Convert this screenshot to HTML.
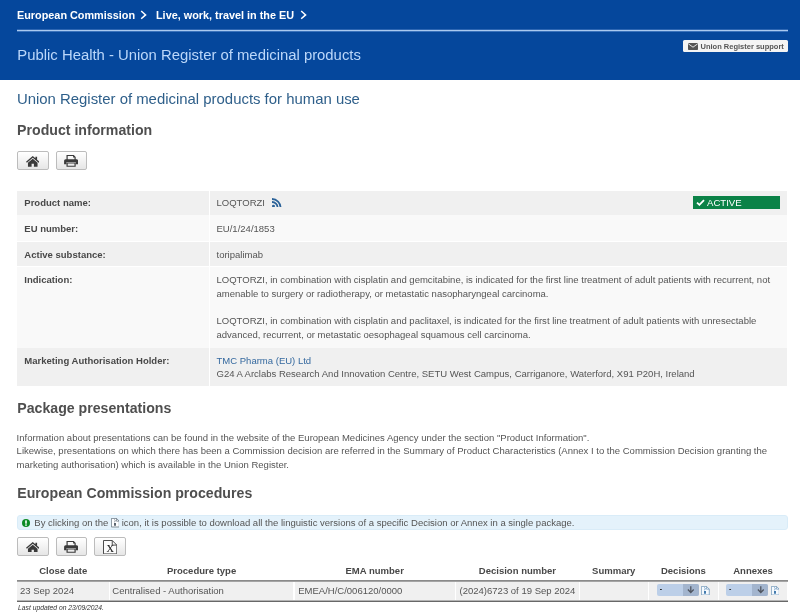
<!DOCTYPE html>
<html lang="en"><head><meta charset="utf-8"><title>Union Register of medicinal products</title>
<style>
*{box-sizing:border-box}
html,body{margin:0;padding:0}
body{width:800px;height:614px;overflow:hidden;background:#fff;font-family:"Liberation Sans",Arial,sans-serif;color:#555;font-size:9.52px;position:relative;will-change:transform}
.hdr{position:absolute;left:0;top:0;width:800px;height:80px;background:#05479c}
.x{position:absolute;white-space:nowrap;line-height:14px;height:14px}
.b{font-weight:bold;color:#484848}
.crumb{color:#fff;font-weight:bold;font-size:10.85px}
.site{color:#bbd7fa;font-size:14.87px;line-height:20px;height:20px}
h1.x{margin:0;font-weight:normal;font-size:14.92px;color:#2e5f8a;line-height:20px;height:20px}
h2.x{margin:0;font-weight:bold;font-size:14.15px;color:#4f4f4f;line-height:20px;height:20px}
.support{position:absolute;left:683px;top:39.6px;width:104.5px;height:12.4px;background:#f4f4f4;border-radius:1.5px}
.btn{position:absolute;height:19px;border:1px solid #bcbcbc;border-radius:2px;background:linear-gradient(#ffffff,#e6e6e6)}
.btn svg{position:absolute}
.cell{position:absolute}
.odd{background:#f0f0f0}
.even{background:#f9f9f9}
a{color:#35699f;text-decoration:none}
.active{position:absolute;left:692.5px;top:196px;width:87.5px;height:13px;background:#0b8247}
.info{position:absolute;left:17px;top:515.3px;width:770.5px;height:15.2px;background:#e4f2fb;border:1px solid #d9ecf8;border-radius:3px}
.sel{position:absolute;top:584px;height:11.5px;background:#bccfe8;border-radius:2px;overflow:hidden}
.sel i{position:absolute;right:0;top:0;bottom:0;width:16px;background:#a3b5ce}
.foot{font-size:6.75px;font-style:italic;color:#333;line-height:10px;height:10px}
svg{display:block}
</style></head><body>

<div class="hdr">
<div class="x crumb" style="left:17px;top:8px;">European Commission</div>
<div class="x crumb" style="left:156px;top:8px;">Live, work, travel in the EU</div>
<svg class="x" style="left:140px;top:10.2px;height:10px" width="7" height="10" viewBox="0 0 7 10"><path d="M1.2 1 L5.6 4.9 L1.2 8.8" stroke="#fff" stroke-width="1.5" fill="none"/></svg>
<svg class="x" style="left:299.5px;top:10.2px;height:10px" width="7" height="10" viewBox="0 0 7 10"><path d="M1.2 1 L5.6 4.9 L1.2 8.8" stroke="#fff" stroke-width="1.5" fill="none"/></svg>
<div style="position:absolute;left:17px;top:30px;width:770.5px;height:1px;background:#a9c9f0"></div>
<div style="position:absolute;left:17px;top:29px;width:770.5px;height:1px;background:#2d66b2"></div>
<div style="position:absolute;left:17px;top:31px;width:770.5px;height:1px;background:#3a72bb"></div>
<div class="x site" style="left:17.3px;top:45px;">Public Health - Union Register of medicinal products</div>
<div class="support"><svg style="position:absolute;left:4.5px;top:3.5px" width="10" height="7" viewBox="0 0 10 7"><rect width="10" height="7" rx="0.8" fill="#555"/><path d="M0.3 0.8 L5 4.2 L9.7 0.8" stroke="#f4f4f4" stroke-width="0.9" fill="none"/></svg>
<div class="x b" style="left:17.5px;top:2px;font-size:7.5px;line-height:10px;height:10px;color:#555">Union Register support</div></div>
</div>
<h1 class="x " style="left:16.9px;top:89px;">Union Register of medicinal products for human use</h1>
<h2 class="x " style="left:17.1px;top:120px;">Product information</h2>
<div class="btn" style="left:17px;top:151.3px;width:31.5px"><svg style="left:7.9px;top:3.5px" width="13.5" height="10.8" viewBox="0 0 27 21.6"><path d="M13.5 0 L0 11.6 L1.8 13.7 L13.5 3.7 L25.2 13.7 L27 11.6 L22.2 7.5 V1.4 H18.8 V4.6 Z" fill="#3a3a3a"/><path d="M13.5 5.5 L3.9 13.7 V21.6 H11.2 V15.4 H15.8 V21.6 H23.1 V13.7 Z" fill="#3a3a3a"/></svg></div>
<div class="btn" style="left:55.5px;top:151.3px;width:31.5px"><svg style="left:7.3px;top:3.0px" width="14.2" height="11.8" viewBox="0 0 28 23.6"><path d="M4.8 0 H19.4 L23.2 3.8 V10 H20.8 V5 H18 V2.2 H7.2 V10 H4.8 Z" fill="#3a3a3a"/><path d="M3 8.6 H25 Q28 8.6 28 11.6 V18.6 H23.2 V13.8 H4.8 V18.6 H0 V11.6 Q0 8.6 3 8.6 Z" fill="#3a3a3a"/><path d="M4.8 15 H23.2 V23.6 H4.8 Z M7.2 17.2 V21.4 H20.8 V17.2 Z" fill="#3a3a3a" fill-rule="evenodd"/></svg></div>
<div class="cell odd" style="left:17px;top:190.5px;width:192px;height:24.0px"></div>
<div class="cell odd" style="left:209.8px;top:190.5px;width:577.7px;height:24.0px"></div>
<div class="cell even" style="left:17px;top:215.2px;width:192px;height:26.1px"></div>
<div class="cell even" style="left:209.8px;top:215.2px;width:577.7px;height:26.1px"></div>
<div class="cell odd" style="left:17px;top:242px;width:192px;height:24.3px"></div>
<div class="cell odd" style="left:209.8px;top:242px;width:577.7px;height:24.3px"></div>
<div class="cell even" style="left:17px;top:267px;width:192px;height:80.5px"></div>
<div class="cell even" style="left:209.8px;top:267px;width:577.7px;height:80.5px"></div>
<div class="cell odd" style="left:17px;top:348.2px;width:192px;height:37.4px"></div>
<div class="cell odd" style="left:209.8px;top:348.2px;width:577.7px;height:37.4px"></div>
<div class="x b" style="left:24.3px;top:196px;">Product name:</div>
<div class="x b" style="left:24.3px;top:222px;">EU number:</div>
<div class="x b" style="left:24.3px;top:248px;">Active substance:</div>
<div class="x b" style="left:24.3px;top:273px;">Indication:</div>
<div class="x b" style="left:24.3px;top:354px;">Marketing Authorisation Holder:</div>
<div class="x " style="left:216.5px;top:196px;">LOQTORZI</div>
<svg class="x" style="left:271.6px;top:197.8px;height:9.7px" width="10.5" height="9.7" viewBox="0 0 20 18"><circle cx="2.8" cy="15.2" r="2.8" fill="#2b6298"/><path d="M0 7.4 A10.6 10.6 0 0 1 10.6 18" stroke="#2b6298" stroke-width="3.4" fill="none"/><path d="M0 1.7 A16.3 16.3 0 0 1 16.3 18" stroke="#2b6298" stroke-width="3.4" fill="none"/></svg>
<div class="active"><svg style="position:absolute;left:3px;top:3.2px" width="9" height="7" viewBox="0 0 18 14"><path d="M2 7.2 L6.8 11.6 L16 2.2" stroke="#fff" stroke-width="3.6" fill="none"/></svg>
<div class="x" style="left:14.5px;top:0px;color:#fff;font-size:9.6px">ACTIVE</div></div>
<div class="x " style="left:216.5px;top:222px;">EU/1/24/1853</div>
<div class="x " style="left:216.5px;top:248px;">toripalimab</div>
<div class="x " style="left:216.5px;top:273px;">LOQTORZI, in combination with cisplatin and gemcitabine, is indicated for the first line treatment of adult patients with recurrent, not</div>
<div class="x " style="left:216.5px;top:287px;">amenable to surgery or radiotherapy, or metastatic nasopharyngeal carcinoma.</div>
<div class="x " style="left:216.5px;top:314px;">LOQTORZI, in combination with cisplatin and paclitaxel, is indicated for the first line treatment of adult patients with unresectable</div>
<div class="x " style="left:216.5px;top:328px;">advanced, recurrent, or metastatic oesophageal squamous cell carcinoma.</div>
<div class="x " style="left:216.5px;top:354px;"><a>TMC Pharma (EU) Ltd</a></div>
<div class="x " style="left:216.5px;top:367px;">G24 A Arclabs Research And Innovation Centre, SETU West Campus, Carriganore, Waterford, X91 P20H, Ireland</div>
<h2 class="x " style="left:17.3px;top:398px;">Package presentations</h2>
<div class="x " style="left:16.6px;top:431px;">Information about presentations can be found in the website of the European Medicines Agency under the section "Product Information".</div>
<div class="x " style="left:16.6px;top:444px;">Likewise, presentations on which there has been a Commission decision are referred in the Summary of Product Characteristics (Annex I to the Commission Decision granting the</div>
<div class="x " style="left:16.6px;top:458px;">marketing authorisation) which is available in the Union Register.</div>
<h2 class="x " style="left:17.3px;top:483px;">European Commission procedures</h2>
<div class="info"></div>
<svg class="x" style="left:22px;top:519.2px;height:8px" width="8" height="8" viewBox="0 0 16 16"><circle cx="8" cy="8" r="8" fill="#0c8a25"/><rect x="6.4" y="2.8" width="3.2" height="6.6" fill="#fff"/><rect x="6.4" y="10.8" width="3.2" height="2.8" fill="#fff"/></svg>
<div class="x " style="left:34.3px;top:516px;">By clicking on the</div>
<svg class="x" style="left:110.8px;top:518.4px;height:9.4px" width="8.7" height="9.4" viewBox="0 0 17.4 18.8"><path d="M0.8 0.8 H11 L16.6 6.4 V18 H0.8 Z" fill="#fdfeff" stroke="#5c6b78" stroke-width="1.5"/><path d="M11 0.8 V6.4 H16.6" fill="none" stroke="#5c6b78" stroke-width="1.3"/><path d="M6.4 3 H8 V4.6 H6.4 Z M8 5 H9.6 V6.6 H8 Z M6.4 7 H8 V8.6 H6.4 Z M6.2 10 H9.8 V15.6 H6.2 Z" fill="#4a5560"/></svg>
<div class="x " style="left:121.7px;top:516px;">icon, it is possible to download all the linguistic versions of a specific Decision or Annex in a single package.</div>
<div class="btn" style="left:17px;top:537px;width:31.5px"><svg style="left:7.9px;top:3.5px" width="13.5" height="10.8" viewBox="0 0 27 21.6"><path d="M13.5 0 L0 11.6 L1.8 13.7 L13.5 3.7 L25.2 13.7 L27 11.6 L22.2 7.5 V1.4 H18.8 V4.6 Z" fill="#3a3a3a"/><path d="M13.5 5.5 L3.9 13.7 V21.6 H11.2 V15.4 H15.8 V21.6 H23.1 V13.7 Z" fill="#3a3a3a"/></svg></div>
<div class="btn" style="left:55.5px;top:537px;width:31.5px"><svg style="left:7.3px;top:3.0px" width="14.2" height="11.8" viewBox="0 0 28 23.6"><path d="M4.8 0 H19.4 L23.2 3.8 V10 H20.8 V5 H18 V2.2 H7.2 V10 H4.8 Z" fill="#3a3a3a"/><path d="M3 8.6 H25 Q28 8.6 28 11.6 V18.6 H23.2 V13.8 H4.8 V18.6 H0 V11.6 Q0 8.6 3 8.6 Z" fill="#3a3a3a"/><path d="M4.8 15 H23.2 V23.6 H4.8 Z M7.2 17.2 V21.4 H20.8 V17.2 Z" fill="#3a3a3a" fill-rule="evenodd"/></svg></div>
<div class="btn" style="left:94.2px;top:537px;width:31.5px"><svg style="left:7.9px;top:1.5px" width="14.3" height="14.4" viewBox="0 0 28.6 28.8"><path d="M1 1 H18.5 L27.6 10.2 V27.8 H1 Z" fill="#fcfcfc" stroke="#444" stroke-width="1.9"/><path d="M18.5 1 V10.2 H27.6" fill="none" stroke="#444" stroke-width="1.9"/><text x="14.6" y="24.8" font-size="30" font-family="Liberation Serif,serif" text-anchor="middle" fill="#262626">x</text></svg></div>
<div class="x b" style="left:17px;width:92.4px;top:564px;text-align:center">Close date</div>
<div class="x b" style="left:109.4px;width:184.4px;top:564px;text-align:center">Procedure type</div>
<div class="x b" style="left:293.8px;width:161.8px;top:564px;text-align:center">EMA number</div>
<div class="x b" style="left:455.6px;width:123.7px;top:564px;text-align:center">Decision number</div>
<div class="x b" style="left:579.3px;width:68.9px;top:564px;text-align:center">Summary</div>
<div class="x b" style="left:648.2px;width:70.5px;top:564px;text-align:center">Decisions</div>
<div class="x b" style="left:718.7px;width:68.8px;top:564px;text-align:center">Annexes</div>
<div style="position:absolute;left:17px;top:580px;width:770.5px;height:1px;background:#8a8a8a"></div>
<div style="position:absolute;left:17px;top:581px;width:770.5px;height:1px;background:#a4a4a4"></div>
<div style="position:absolute;left:17px;top:600px;width:770.5px;height:1px;background:#b4b4b4"></div>
<div style="position:absolute;left:17px;top:601px;width:770.5px;height:1px;background:#686868"></div>
<div class="cell" style="left:17px;top:582px;width:91.7px;height:18px;background:#f0f0f0"></div>
<div class="cell" style="left:110.1px;top:582px;width:183.0px;height:18px;background:#f0f0f0"></div>
<div class="cell" style="left:294.5px;top:582px;width:160.4px;height:18px;background:#f0f0f0"></div>
<div class="cell" style="left:456.3px;top:582px;width:122.3px;height:18px;background:#f0f0f0"></div>
<div class="cell" style="left:580.0px;top:582px;width:67.5px;height:18px;background:#f0f0f0"></div>
<div class="cell" style="left:648.9px;top:582px;width:69.1px;height:18px;background:#f0f0f0"></div>
<div class="cell" style="left:719.4px;top:582px;width:68.1px;height:18px;background:#f0f0f0"></div>
<div class="x " style="left:20px;top:584px;">23 Sep 2024</div>
<div class="x " style="left:112.3px;top:584px;">Centralised - Authorisation</div>
<div class="x " style="left:298.2px;top:584px;">EMEA/H/C/006120/0000</div>
<div class="x " style="left:459.5px;top:584px;">(2024)6723 of 19 Sep 2024</div>
<div class="sel" style="left:657.1px;width:42.1px"><i></i><div class="x" style="left:2.6px;top:-2.2px;color:#222;font-size:7px;font-weight:bold">-</div><svg style="position:absolute;right:4.2px;top:2.2px" width="7.6" height="7.4" viewBox="0 0 15 15"><path d="M7.5 0.5 V13 M1.6 7.2 L7.5 13.2 L13.4 7.2" stroke="#4f5560" stroke-width="2.6" fill="none"/></svg></div>
<svg class="x" style="left:701.2px;top:585.9px;height:9.4px" width="8.7" height="9.4" viewBox="0 0 17.4 18.8"><path d="M0.8 0.8 H11 L16.6 6.4 V18 H0.8 Z" fill="#f6fafe" stroke="#6b93b6" stroke-width="1.5"/><path d="M11 0.8 V6.4 H16.6" fill="none" stroke="#6b93b6" stroke-width="1.3"/><path d="M6.4 3 H8 V4.6 H6.4 Z M8 5 H9.6 V6.6 H8 Z M6.4 7 H8 V8.6 H6.4 Z M6.2 10 H9.8 V15.6 H6.2 Z" fill="#2f6da5"/></svg>
<div class="sel" style="left:726.4px;width:42.1px"><i></i><div class="x" style="left:2.6px;top:-2.2px;color:#222;font-size:7px;font-weight:bold">-</div><svg style="position:absolute;right:4.2px;top:2.2px" width="7.6" height="7.4" viewBox="0 0 15 15"><path d="M7.5 0.5 V13 M1.6 7.2 L7.5 13.2 L13.4 7.2" stroke="#4f5560" stroke-width="2.6" fill="none"/></svg></div>
<svg class="x" style="left:770.5px;top:585.9px;height:9.4px" width="8.7" height="9.4" viewBox="0 0 17.4 18.8"><path d="M0.8 0.8 H11 L16.6 6.4 V18 H0.8 Z" fill="#f6fafe" stroke="#6b93b6" stroke-width="1.5"/><path d="M11 0.8 V6.4 H16.6" fill="none" stroke="#6b93b6" stroke-width="1.3"/><path d="M6.4 3 H8 V4.6 H6.4 Z M8 5 H9.6 V6.6 H8 Z M6.4 7 H8 V8.6 H6.4 Z M6.2 10 H9.8 V15.6 H6.2 Z" fill="#2f6da5"/></svg>
<div class="x foot" style="left:18px;top:603px;">Last updated on 23/09/2024.</div>
</body></html>
